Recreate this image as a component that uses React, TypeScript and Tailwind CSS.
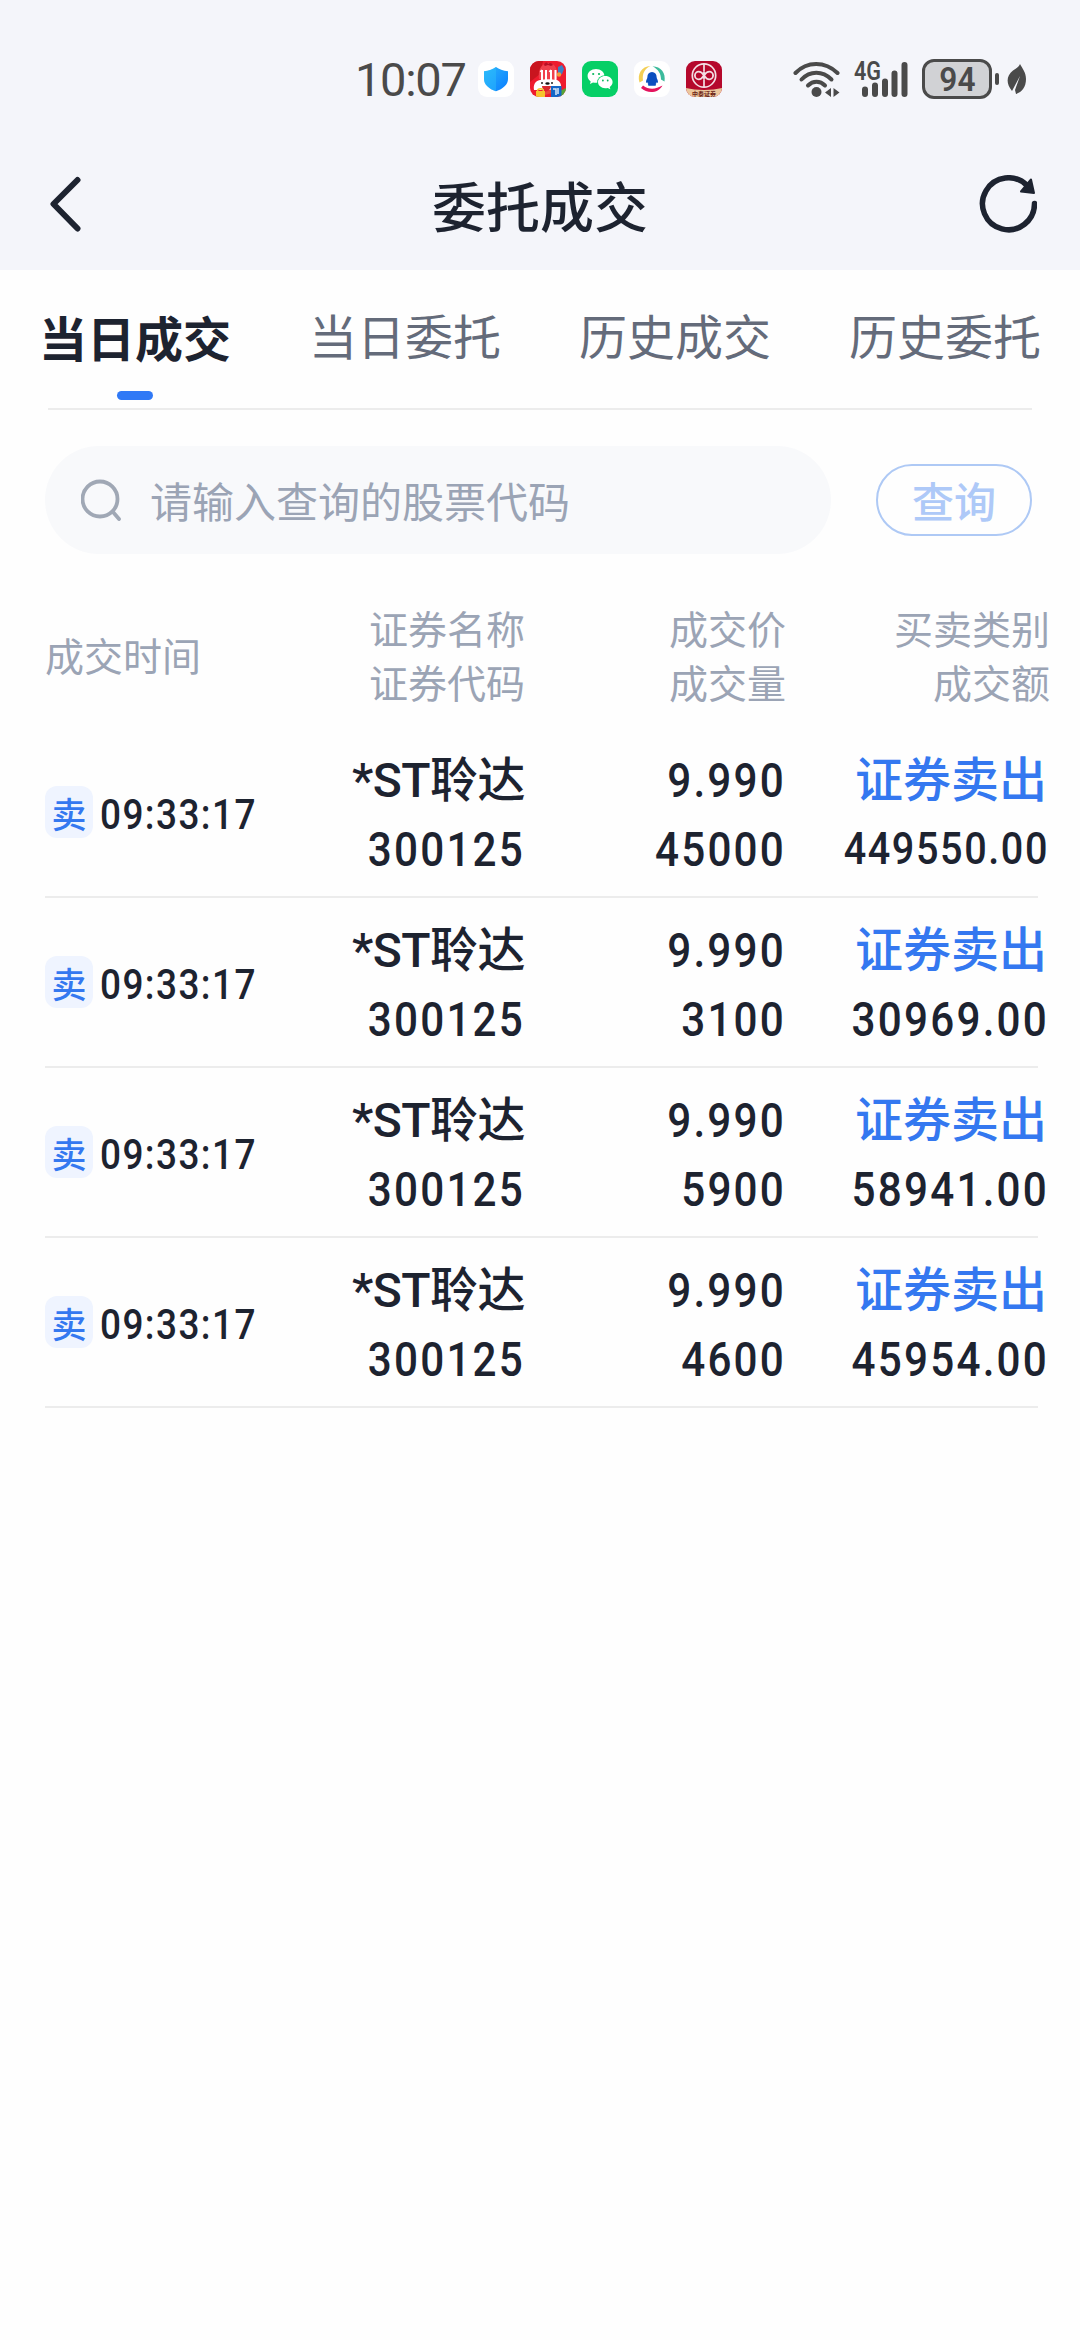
import React from 'react';

interface Deal {
  time: string;
  name: string;
  code: string;
  price: string;
  volume: string;
  amount: string;
}

const tabs = ['当日成交', '当日委托', '历史成交', '历史委托'];

const deals: Deal[] = [
  { time: '09:33:17', name: '*ST聆达', code: '300125', price: '9.990', volume: '45000', amount: '449550.00' },
  { time: '09:33:17', name: '*ST聆达', code: '300125', price: '9.990', volume: '3100', amount: '30969.00' },
  { time: '09:33:17', name: '*ST聆达', code: '300125', price: '9.990', volume: '5900', amount: '58941.00' },
  { time: '09:33:17', name: '*ST聆达', code: '300125', price: '9.990', volume: '4600', amount: '45954.00' }
];

const ShieldApp = () => (
  <svg viewBox="0 0 36 36" className="w-9 h-9">
    <defs>
      <linearGradient id="shield" x1="0" y1="0" x2="1" y2="1">
        <stop offset="0" stopColor="#2bb5fb" />
        <stop offset="1" stopColor="#0a7dff" />
      </linearGradient>
    </defs>
    <rect width="36" height="36" rx="9" fill="#fff" />
    <path d="M18 6c3 2.400 7 3.700 12 4.200V18c0 5.500-5 10-12 12.200C11 28 6 23.500 6 18v-7.800C11 9.700 15 8.400 18 6z" fill="url(#shield)" />
    <path d="M18 6c-3 2.400-7 3.700-12 4.200V18c0 5.500 5 10 12 12.200z" fill="#2fc0fb" opacity=".45" />
  </svg>
);

const ShoppingApp = () => (
  <svg viewBox="0 0 36 36" className="w-9 h-9">
    <defs>
      <clipPath id="shop"><rect width="36" height="36" rx="9" /></clipPath>
    </defs>
    <g clipPath="url(#shop)">
      <rect width="36" height="36" fill="#ee1c2e" />
      <path d="M0 0h13l-3 13-10 8z" fill="#c9151f" />
      <path d="M9 18C8 10 10 3 18 2c8 0 10 7 9 16z" fill="#f0404c" />
      <path d="M14 4c1-3 3-3 4-1 2-2 4-1 5 1l-2 1-3-1-3 1z" fill="#b80f24" />
      <path d="M28 6l4-2 2 4-2 5-4 1z" fill="#3c7fc4" />
      <circle cx="29" cy="13.500" r="2.200" fill="#f39a3b" />
      <path d="M4 29c-1-5 1-9 6-10 3-1 13-1 17 0 4 2 5 6 3 10z" fill="#fff" />
      <path d="M12 9v10M16 9v10M21 9v10M25.500 9v10M10.500 11l1.500-2M19.500 11l1.500-2" stroke="#fff" strokeWidth="2" fill="none" />
      <circle cx="12" cy="22" r="1" fill="#222" />
      <circle cx="22" cy="22" r="1" fill="#222" />
      <ellipse cx="17.500" cy="22.500" rx="2.200" ry="1.300" fill="#111" />
      <path d="M12 25h9c0 3-2 4.500-4.500 4.500S12 28 12 25z" fill="#d92a2f" />
      <path d="M30 30l6-3v9h-6z" fill="#56a637" />
      <rect x="6" y="30" width="9" height="6" fill="#f6c52c" />
      <path d="M7.500 30c0-3 6-3 6 0" stroke="#f6c52c" strokeWidth="1.300" fill="none" />
      <path d="M15 31l7-3v4l-7 2z" fill="#e84a3a" />
      <rect x="21" y="25" width="10.500" height="11" fill="#1467c7" />
      <path d="M23 28h3v6M28 27v6" stroke="#dbe9f8" strokeWidth="1.500" fill="none" />
    </g>
  </svg>
);

const WechatApp = () => (
  <svg viewBox="0 0 36 36" className="w-9 h-9">
    <rect width="36" height="36" rx="9" fill="#06cf66" />
    <path d="M14 8C9.300 8 5.600 11.100 5.600 15c0 2.200 1.200 4.100 3.100 5.400L8 23l3-1.600c1 .3 1.900.4 3 .4 4.700 0 8.400-3 8.400-6.800S18.700 8 14 8z" fill="#fff" />
    <ellipse cx="23.200" cy="21.200" rx="8" ry="7" fill="#06cf66" />
    <path d="M23.300 15c-4.100 0-7.300 2.700-7.300 6.100s3.200 6.100 7.300 6.100c.9 0 1.700-.1 2.400-.3l2.700 1.400-.7-2.300c1.800-1.100 2.900-2.900 2.900-4.900 0-3.400-3.200-6.100-7.300-6.100z" fill="#fff" />
    <circle cx="11.200" cy="13" r="1.100" fill="#06b85b" />
    <circle cx="17" cy="13" r="1.100" fill="#06b85b" />
    <circle cx="20.900" cy="19.500" r=".9" fill="#06b85b" />
    <circle cx="25.700" cy="19.500" r=".9" fill="#06b85b" />
  </svg>
);

const PenguinApp = () => (
  <svg viewBox="0 0 36 36" className="w-9 h-9">
    <rect width="36" height="36" rx="9" fill="#fff" />
    <path d="M5.500 21.500C3 13 7.500 5.500 16.500 5c-5.500 2.500-8.500 7-7.500 14.500z" fill="#f3cf55" />
    <path d="M18.500 5.200C27 5.500 32 12 30.500 20.500L27 18.500c0-6-2.500-10-8.500-13.300z" fill="#3dbb9c" />
    <path d="M28.500 24.500c-4 7.500-14.500 9-21.500 2.500l2-2.500c6 4.500 12.500 4 19.500 0z" fill="#e4145e" />
    <path d="M18 11c-3 0-4.600 2.200-4.600 5 0 1.500-1.400 3-1.400 5 0 1 .7 1 1.400.2.200 1 .6 1.500 1.100 1.900-1 .6-.7 1.600.5 1.600h6c1.200 0 1.500-1 .5-1.600.5-.4.900-.9 1.100-1.900.7.800 1.400.8 1.400-.2 0-2-1.400-3.500-1.400-5 0-2.800-1.600-5-4.600-5z" fill="#0b4fc0" />
  </svg>
);

const BrokerApp = () => (
  <svg viewBox="0 0 36 36" className="w-9 h-9">
    <defs>
      <clipPath id="broker"><rect width="36" height="36" rx="9" /></clipPath>
    </defs>
    <g clipPath="url(#broker)">
      <rect width="36" height="36" fill="#b5082c" />
      <circle cx="18" cy="14.500" r="11.700" fill="none" stroke="#f3dfe4" strokeWidth="1.700" />
      <path d="M18 3v7.500M18 18.500V26" stroke="#f3dfe4" strokeWidth="1.700" />
      <path d="M18 10.500v8M18 14.500c-2-3-3.500-3.800-5.300-3.800a3.800 3.800 0 0 0 0 7.600c1.800 0 3.300-.8 5.300-3.800s3.500-3.800 5.300-3.800a3.800 3.800 0 0 1 0 7.600c-1.800 0-3.300-.8-5.300-3.800z" fill="none" stroke="#f3dfe4" strokeWidth="1.800" />
      <path d="M0 27c10 2.500 26 2.500 36 0V36H0z" fill="#ecc79d" />
      <text x="18" y="34.500" textAnchor="middle" className="font-['Noto_Sans_CJK_SC',sans-serif] text-[6px] font-bold" fill="#6b2317">中泰证券</text>
    </g>
  </svg>
);

const WifiIcon = () => (
  <svg viewBox="0 0 48 38" className="w-12 h-[38px]" fill="none" stroke="#4a4a4a" strokeLinecap="round">
    <path d="M2.500 13C14 1 32 1 44.500 13" strokeWidth="4" />
    <path d="M8.500 19.500c8.500-9 21-9 30 0" strokeWidth="4" />
    <path d="M15 25.500c5-5 12-5 17 0" strokeWidth="4" />
    <circle cx="23.500" cy="32" r="5" fill="#4a4a4a" stroke="none" />
    <path d="M38 28v9l-6-4.500zM40.500 28v9l6-4.500z" fill="#4a4a4a" stroke="none" />
  </svg>
);

const SignalIcon = () => (
  <svg viewBox="0 0 56 38" className="w-14 h-[38px] overflow-visible">
    <text x="0" y="19.500" textLength="27" lengthAdjust="spacingAndGlyphs" className="font-['Roboto',sans-serif] text-[25px] font-semibold" fill="#4a4a4a">4G</text>
    <g stroke="#4a4a4a" strokeWidth="6" strokeLinecap="round">
      <path d="M11 29.500V34M21 25.500V34M31 21.500V34M40.500 13.500V34M50.500 5V34" />
    </g>
  </svg>
);

const StatusBar = () => (
  <div className="flex items-center h-[158px] pl-[355px] pr-[53px]">
    <span className="w-[123px] font-['Roboto',sans-serif] text-[47px] leading-none tracking-[-1.3px] text-[#4a4a4a]">10:07</span>
    <div className="flex gap-4">
      <ShieldApp />
      <ShoppingApp />
      <WechatApp />
      <PenguinApp />
      <BrokerApp />
    </div>
    <div className="flex items-center ml-auto">
      <WifiIcon />
      <div className="ml-[13px]">
        <SignalIcon />
      </div>
      <div className="flex items-center justify-center ml-3 w-[70px] h-10 rounded-xl border-[3px] border-[#4a4a4a] bg-[#d1d2d5] font-['Roboto',sans-serif] text-[34px] leading-none font-semibold text-[#4a4a4a]">
        <span className="scale-x-[0.93]">94</span>
      </div>
      <div className="ml-[3px] w-1 h-3 rounded-full bg-[#4a4a4a]" />
      <svg viewBox="0 0 20 30" className="ml-2 w-5 h-[30px]">
        <path d="M13 0c2 4 6 8 6 15 0 8-4 13-10 15L8 26 13 12 5 27C-1 20-1 12 6 6.500 9 4.500 12 3 13 0z" fill="#4a4a4a" />
      </svg>
    </div>
  </div>
);

const TitleBar = () => (
  <div className="flex items-center justify-between h-28 px-[43px] pb-5">
    <svg viewBox="0 0 58 56" className="w-[58px] h-14">
      <path d="M34.500 4L10.500 28l24 24.500" fill="none" stroke="#1d2330" strokeWidth="6" strokeLinecap="round" strokeLinejoin="round" />
    </svg>
    <h1 className="pt-0.5 text-[54px] leading-none font-medium">委托成交</h1>
    <svg viewBox="0 0 58 58" className="w-[58px] h-[58px]">
      <path d="M55.500 28.500A26 26 0 1 1 48 10.500" fill="none" stroke="#1d2330" strokeWidth="5.500" strokeLinecap="round" />
      <path d="M52 4.500l3 13.500-13-1.500z" fill="#1d2330" stroke="#1d2330" strokeWidth="2" strokeLinejoin="round" />
    </svg>
  </div>
);

const DealRow: React.FC<{ deal: Deal }> = ({ deal }) => {
  const isLong = deal.amount.length > 8;
  const number = 'h-[69px] leading-[69px] origin-right scale-x-[0.88] tracking-[2.5px]';

  return (
    <div className="flex h-[170px] w-[993px] border-b-2 border-[#ececec] font-['Roboto','Noto_Sans_CJK_SC',sans-serif] text-[48px] font-medium whitespace-nowrap">
      <div className="flex shrink-0 items-center w-60">
        <span className="flex items-center justify-center w-12 h-[52px] rounded-xl bg-[#eff4ff] font-['Noto_Sans_CJK_SC',sans-serif] text-[35px] leading-none text-[#3478f0]">卖</span>
        <span className="ml-[7px] pt-1.5 text-[42px] leading-none origin-left scale-x-[0.88] tracking-[1.6px]">{deal.time}</span>
      </div>
      <div className="flex flex-col shrink-0 w-60 pt-[18px] text-right">
        <span className="h-[69px] leading-[69px] tracking-[-0.5px]">{deal.name}</span>
        <span className={number}>{deal.code}</span>
      </div>
      <div className="flex flex-col shrink-0 w-[261px] pt-[18px] text-right">
        <span className={number}>{deal.price}</span>
        <span className={number}>{deal.volume}</span>
      </div>
      <div className="flex flex-col shrink-0 w-[263px] pt-[18px] text-right">
        <span className="h-[69px] leading-[69px] pr-0.5 text-[#3478f0]">证券卖出</span>
        <span className={isLong ? 'h-[69px] leading-[67px] origin-right scale-x-[0.88] text-[45px] tracking-[1.8px]' : number}>
          {deal.amount}
        </span>
      </div>
    </div>
  );
};

const App: React.FC = () => {
  return (
    <div className="w-[1080px] h-[2340px] overflow-hidden bg-[#fefefe] font-['Noto_Sans_CJK_SC',sans-serif] text-[#1d2330]">
      <header className="h-[270px] bg-[#f4f5fa]">
        <StatusBar />
        <TitleBar />
      </header>

      {/* Tabs */}
      <nav className="grid grid-cols-4 h-[138px]">
        {tabs.map((tab, index) => (
          <button key={tab} className="flex flex-col items-center pt-8 text-[48px] leading-[64px] whitespace-nowrap">
            <span className={index === 0 ? 'pt-0.5 font-bold' : 'text-[#646b7a]'}>{tab}</span>
            {index === 0 && <span className="mt-[23px] w-9 h-[9px] rounded-full bg-[#3079f6]" />}
          </button>
        ))}
      </nav>
      <div className="mx-12 h-0.5 bg-[#ececec]" />

      {/* Search */}
      <div className="flex items-center justify-between mt-9 pl-[45px] pr-12 text-[42px] leading-none">
        <div className="flex items-center w-[786px] h-[108px] pl-9 rounded-full bg-[#f8f9fb] text-[#9ba4b5]">
          <svg viewBox="0 0 42 42" className="w-[42px] h-[42px]" fill="none" stroke="#a0a8b5" strokeWidth="3.800" strokeLinecap="round">
            <circle cx="19" cy="20" r="17.500" />
            <path d="M32 33l6 7" />
          </svg>
          <span className="pl-[27px]">请输入查询的股票代码</span>
        </div>
        <button className="flex items-center justify-center w-[156px] h-[72px] rounded-full border-2 border-[#aec9f5] text-[#aec9f8] font-medium">
          查询
        </button>
      </div>

      {/* Column titles */}
      <div className="flex items-center h-[174px] pl-[45px] pt-[26px] text-[39px] leading-[54px] text-[#9ba4b5]">
        <div className="shrink-0 w-60">成交时间</div>
        <div className="shrink-0 w-60 text-right">证券名称<br />证券代码</div>
        <div className="shrink-0 w-[261px] text-right">成交价<br />成交量</div>
        <div className="shrink-0 w-[264px] text-right">买卖类别<br />成交额</div>
      </div>

      <div className="pl-[45px]">
        {deals.map((deal, index) => (
          <DealRow key={index} deal={deal} />
        ))}
      </div>
    </div>
  );
};

export default App;
